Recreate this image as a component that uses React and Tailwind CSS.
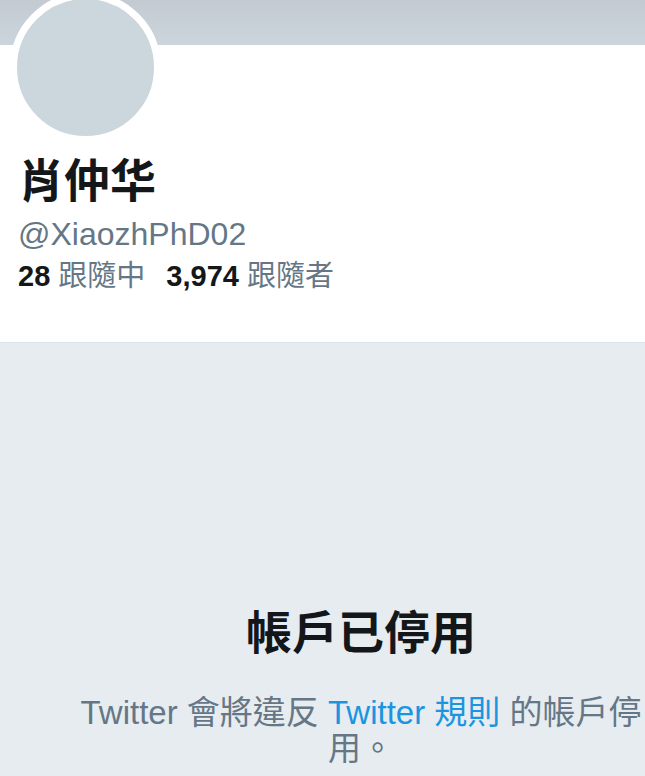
import React from "react";

const font = { fontFamily: '"Liberation Sans", "Noto Sans CJK TC", sans-serif' };

export default function App() {
  return (
    <div
      className="w-[645px] h-[776px] overflow-hidden bg-[#e6ecf0]"
      style={font}
    >
      {/* banner */}
      <div className="h-[45px] bg-gradient-to-b from-[#c3cad2] to-[#ccd5dc]" />

      {/* profile header */}
      <div className="flow-root h-[298px] bg-white border-b border-[#dde4ea] pl-[10px]">
        <div className="-mt-[53px] w-[151px] h-[151px] rounded-full border-[7px] border-white bg-[#ccd6dd]" />
        <div className="pl-[8px]">
          <div className="mt-[12px] text-[46px] leading-[52px] font-bold text-[#14171a]">
            肖仲华
          </div>
          <div className="mt-[9px] text-[32px] leading-[36px] text-[#657786]">
            @XiaozhPhD02
          </div>
          <div className="mt-[8px] text-[29px] leading-[32px] flex gap-[21px]">
            <span>
              <span className="font-bold text-[#14171a]">28</span>{" "}
              <span className="text-[#657786]">跟隨中</span>
            </span>
            <span>
              <span className="font-bold text-[#14171a]">3,974</span>{" "}
              <span className="text-[#657786]">跟隨者</span>
            </span>
          </div>
        </div>
      </div>

      {/* suspended notice */}
      <div className="ml-[78px] w-[566px] pt-[264px] text-center">
        <div className="text-[46px] leading-[52px] font-bold text-[#14171a]">
          帳戶已停用
        </div>
        <div className="mt-[36px] text-[33px] leading-[36px] text-[#657786]">
          Twitter 會將違反 <span className="text-[#1b95e0]">Twitter 規則</span>{" "}
          的帳戶停用。
        </div>
      </div>
    </div>
  );
}
